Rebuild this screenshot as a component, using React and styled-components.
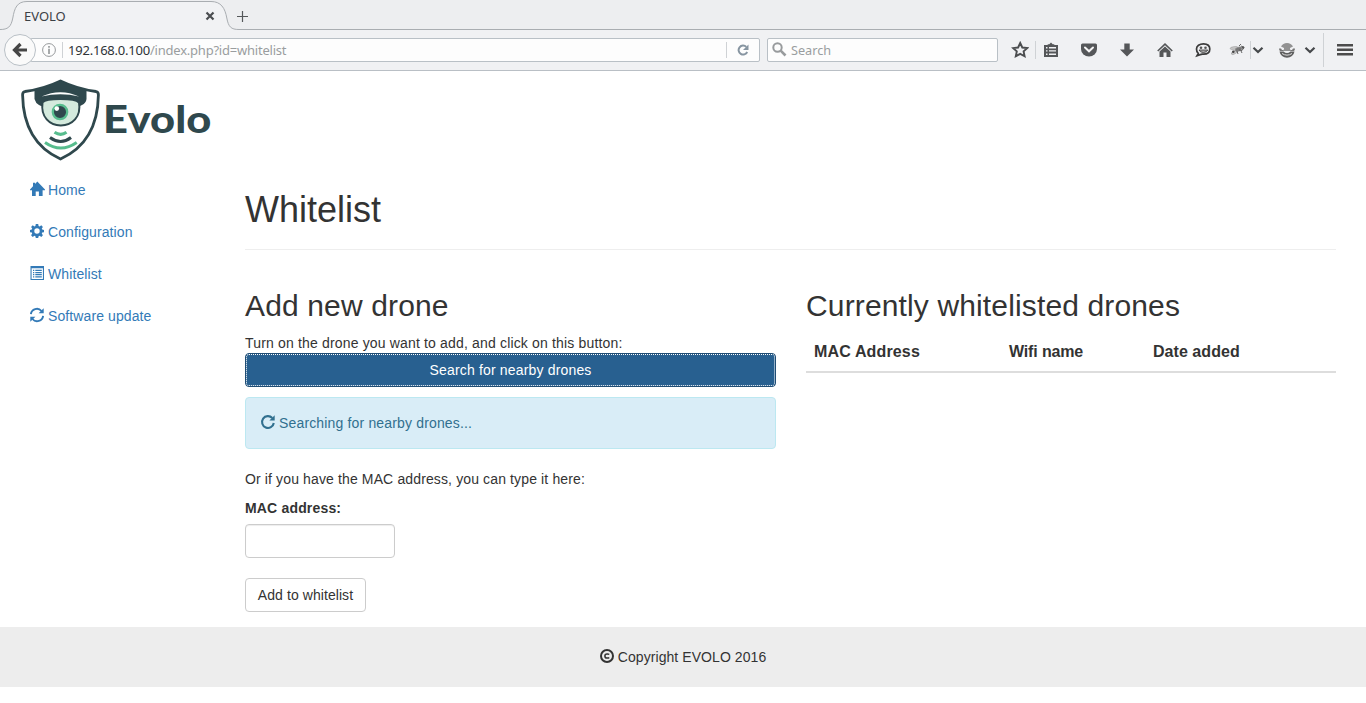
import React from 'react';
import styled, { createGlobalStyle } from 'styled-components';

const GlobalStyle = createGlobalStyle`
  *, *::before, *::after { box-sizing: border-box; }
  html, body { margin: 0; padding: 0; background: #fff; }
  body {
    font-family: "Liberation Sans", Arial, sans-serif;
    font-size: 14px;
    line-height: 20px;
    letter-spacing: 0.1px;
    color: #333;
    overflow: hidden;
  }
  svg { display: block; flex: none; }
`;

/* ---------- browser window ---------- */

const TabStrip = styled.div`
  position: relative;
  display: flex;
  align-items: center;
  height: 30px;
  padding: 2px 0 0 24px;
  background: #edeef0;
  font: 13px/20px "Noto Sans", sans-serif;
  letter-spacing: 0;
  color: #3b4045;
`;

const TabOutline = styled.svg`
  position: absolute;
  left: 0;
  top: 0;
`;

const TabTitle = styled.span`
  position: relative;
  width: 181px;
`;

const TabControl = styled.svg`
  position: relative;
  margin-right: ${(p) => p.$after || 0}px;
`;

const Toolbar = styled.div`
  display: flex;
  align-items: center;
  height: 41px;
  padding: 0 0 1px 4px;
  background: #f0f1f3;
  border-bottom: 1px solid #b9bfc5;
  font: 13px/20px "Noto Sans", sans-serif;
  letter-spacing: 0;
`;

const BackButton = styled.div`
  position: relative;
  z-index: 1;
  display: flex;
  flex: none;
  align-items: center;
  justify-content: center;
  width: 32px;
  height: 32px;
  border: 1px solid #b9c0c6;
  border-radius: 50%;
  background: #fafafa;
`;

const Field = styled.div`
  display: flex;
  flex: none;
  align-items: center;
  width: ${(p) => p.$width}px;
  height: 24px;
  margin-left: ${(p) => p.$before}px;
  padding-left: ${(p) => p.$inset}px;
  border: 1px solid #b9c0c6;
  border-radius: 2px;
  background: #fdfdfd;
  color: #9a9d9f;
`;

const Address = styled.span`
  flex: 1;
  padding-left: 5px;
  font-size: 13px;
  letter-spacing: -0.22px;
  white-space: nowrap;
  b { font-weight: 400; color: #2e3338; }
`;

const Divider = styled.i`
  flex: none;
  width: 1px;
  height: ${(p) => p.$height || 16}px;
  margin-left: ${(p) => p.$before || 0}px;
  background: #cfd2d5;
`;

const Placeholder = styled.span`
  padding-left: 4px;
  font-size: 12.7px;
`;

const ReloadSlot = styled.div`
  display: flex;
  justify-content: center;
  width: 32px;
`;

const Tool = styled.div`
  display: flex;
  flex: none;
  justify-content: center;
  width: ${(p) => p.$width}px;
  margin-left: ${(p) => p.$before || 0}px;
`;

/* ---------- page ---------- */

const LogoBar = styled.header`
  height: 99px;
  padding: 6px 0 0 20px;
`;

const Columns = styled.div`
  display: flex;
  height: 457px;
`;

const Sidebar = styled.nav`
  display: flex;
  flex-direction: column;
  gap: 2px;
  width: 245px;
  padding-left: 15px;
`;

const NavLink = styled.a`
  display: flex;
  align-items: center;
  gap: 4px;
  height: 40px;
  padding: 0 15px;
  color: #337ab7;
  text-decoration: none;
  svg { margin-top: -2px; }
`;

const Main = styled.main`
  width: 1091px;
  padding-top: 20px;
`;

const PageHeader = styled.div`
  height: 60px;
  margin-bottom: 20px;
  border-bottom: 1px solid #eee;
`;

const Title = styled.h1`
  margin: 0;
  font-size: 36px;
  line-height: 40px;
  font-weight: 400;
  letter-spacing: 0;
`;

const Panels = styled.div`
  display: grid;
  grid-template-columns: 531px 530px;
  gap: 30px;
`;

const Heading = styled.h2`
  margin: 19px 0 11px;
  font-size: 30px;
  line-height: 33px;
  font-weight: 400;
  letter-spacing: 0.14px;
`;

const Text = styled.p`
  margin: 0 0 ${(p) => p.$after || 0}px;
  letter-spacing: ${(p) => p.$tracking || 0.13}px;
`;

const Button = styled.button`
  display: block;
  width: ${(p) => (p.$primary ? '100%' : '121px')};
  height: 34px;
  padding: 0;
  border: 1px solid ${(p) => (p.$primary ? '#204d74' : '#ccc')};
  border-radius: 4px;
  outline: ${(p) => (p.$primary ? '1px dotted #fff' : 'none')};
  outline-offset: -2px;
  background: ${(p) => (p.$primary ? '#286090' : '#fff')};
  color: ${(p) => (p.$primary ? '#fff' : '#333')};
  font: 14px/20px "Liberation Sans", Arial, sans-serif;
  letter-spacing: ${(p) => (p.$primary ? 0.17 : 0.07)}px;
`;

const Alert = styled.div`
  display: flex;
  align-items: center;
  gap: 4px;
  height: 52px;
  margin: 10px 0 20px;
  padding: 0 15px;
  border: 1px solid #bce8f1;
  border-radius: 4px;
  background: #d9edf7;
  color: #31708f;
  letter-spacing: 0.16px;
  svg { margin-top: -2px; }
`;

const Label = styled.label`
  display: block;
  margin-bottom: 6px;
  font-weight: 700;
  letter-spacing: 0.17px;
`;

const Input = styled.input`
  display: block;
  width: 150px;
  height: 34px;
  margin-bottom: 20px;
  border: 1px solid #ccc;
  border-radius: 4px;
  box-shadow: inset 0 1px 1px rgba(0, 0, 0, 0.075);
`;

const TableHead = styled.div`
  display: grid;
  grid-template-columns: 195px 144px 1fr;
  height: 40px;
  border-bottom: 2px solid #ddd;
  font-size: 16px;
  line-height: 22px;
  font-weight: 700;
`;

const HeadCell = styled.span`
  padding: 8px;
  letter-spacing: ${(p) => p.$tracking}px;
`;

const Footer = styled.footer`
  display: flex;
  align-items: center;
  justify-content: center;
  gap: 4px;
  height: 60px;
  background: #ededed;
  letter-spacing: 0.07px;
  svg { margin-top: -2px; }
`;

/* ---------- drawings ---------- */

const Glyph = ({ children }) => (
  <svg width="14" height="14" viewBox="0 0 14 14" fill="currentColor" overflow="visible">
    {children}
  </svg>
);

const HomeGlyph = () => (
  <Glyph>
    <path d="M7.300 -.5 15 7.500V8.200H12.600V14H8.900V9.500H5.700V14H2V8.200H0V7.500L3 4.300V.8H5.100V2.100Z" />
  </Glyph>
);

const CogGlyph = () => (
  <Glyph>
    <path
      fillRule="evenodd"
      d="M5.800 0h2.400l.4 2 1 .4 1.700-1.100 1.600 1.600-1.100 1.700.4 1 1.800.3v2.300l-1.800.4-.4 1 1.100 1.700-1.600 1.600-1.700-1.100-1 .4-.4 1.800H5.800l-.4-1.800-1-.4-1.700 1.100-1.600-1.600 1.100-1.700-.4-1L0 8.200V5.900l1.800-.3.4-1L1.100 2.900l1.600-1.600 1.700 1.100 1-.4ZM7 4.300A2.700 2.700 0 1 0 7 9.700 2.700 2.700 0 0 0 7 4.300Z"
    />
  </Glyph>
);

const ListGlyph = () => (
  <Glyph>
    <path
      fillRule="evenodd"
      d="M.5 0h13.500v14H.5ZM1.600 2.200v10.700h11.300V2.200ZM3 3.800h1.300v1.200H3Zm2.300 0h6.500v1.200H5.300ZM3 6h1.300v1.200H3Zm2.300 0h6.500v1.200H5.300ZM3 8.100h1.300v1.200H3Zm2.300 0h6.500v1.200H5.300ZM3 10.300h1.300v1.200H3Zm2.300 0h6.500v1.200H5.300Z"
    />
  </Glyph>
);

const RefreshGlyph = () => (
  <Glyph>
    <path
      fill="none"
      stroke="currentColor"
      strokeWidth="1.900"
      d="M.9 6.200A6 6 0 0 1 11.500 3M13.100 7.800A6 6 0 0 1 2.500 11"
    />
    <path d="M13.700.2V5.300H8.600ZM.3 13.800V8.700H5.400Z" />
  </Glyph>
);

const RepeatGlyph = () => (
  <Glyph>
    <path fill="none" stroke="currentColor" strokeWidth="2.100" d="M11.300 3A5.900 5.900 0 1 0 12.800 8" />
    <path d="M13.700.2V5.500H8.400Z" />
  </Glyph>
);

const CopyrightGlyph = () => (
  <Glyph>
    <circle cx="7" cy="7" r="6" fill="none" stroke="currentColor" strokeWidth="2" />
    <path
      fill="none"
      stroke="currentColor"
      strokeWidth="1.500"
      d="M9.200 5.500C8.600 4.800 7.900 4.900 7 4.900 5.500 4.900 4.900 5.700 4.900 7S5.500 9.100 7 9.100C7.900 9.100 8.600 9.200 9.200 8.500"
    />
  </Glyph>
);

const Logo = () => (
  <svg width="195" height="86" viewBox="20 77 195 86">
    <path
      d="M60.500 81Q77 89 96 91.500Q98.500 92 98.400 95C98 124 87 147 60.500 159C34 147 23 124 22.600 95Q22.500 92 25 91.500Q44 89 60.500 81Z"
      fill="#fff"
      stroke="#2f484d"
      strokeWidth="2.800"
    />
    <path d="M34.500 89.500Q48 87 60.500 80.500Q73 87 86.500 89.500V99Q86 103 82 105L80 106H41L39 105Q35.500 103 34.500 99Z" fill="#2f484d" />
    <path
      d="M42.500 102.500Q45 99 60.500 99T79 102.500C81.500 117 72 125.500 60.800 125.500S40.500 117 42.500 102.500Z"
      fill="#d4eadd"
      stroke="#2f484d"
      strokeWidth="2"
    />
    <path d="M41.500 96.500Q60.500 88 79 96.500Q60.500 92 41.500 96.500Z" fill="#fff" />
    <circle cx="60" cy="112" r="7.200" fill="#2f484d" stroke="#57bd8e" strokeWidth="2.300" />
    <circle cx="56.800" cy="108.600" r="2.300" fill="#fff" />
    <g fill="none" strokeWidth="3">
      <path d="M54.500 132.300Q60.800 136.500 66.500 132.300" stroke="#57bd8e" />
      <path d="M50 137.500Q60.800 145.500 71 137.500" stroke="#2f484d" />
      <path d="M45 142.500Q60.800 153.500 76.700 142.500" stroke="#57bd8e" />
    </g>
    <text
      x="103"
      y="132.500"
      fill="#2f484d"
      fontFamily="Lato"
      fontWeight="900"
      fontSize="38.500"
      textLength="108.500"
      lengthAdjust="spacingAndGlyphs"
    >
      Evolo
    </text>
  </svg>
);

const Chevron = () => (
  <svg width="12" height="12" viewBox="0 0 12 12">
    <path d="M1.500 3.800 6 8 10.500 3.800" fill="none" stroke="#45484a" strokeWidth="2.200" />
  </svg>
);

const ToolGlyph = ({ children }) => (
  <svg width="16" height="16" viewBox="0 0 16 16" fill="#555759">
    {children}
  </svg>
);

const navItems = [
  ['Home', HomeGlyph],
  ['Configuration', CogGlyph],
  ['Whitelist', ListGlyph],
  ['Software update', RefreshGlyph],
];

const Browser = () => (
  <>
    <TabStrip>
      <TabOutline width="1366" height="30" viewBox="0 0 1366 30">
        <path
          d="M0 29.500C8 29.500 11 27 12.800 18C14.500 8 17 1.500 27 1.500H211C221 1.500 225 8 226.800 18C228.500 27 231 29.500 239 29.500H1366V31H0Z"
          fill="#f1f2f4"
          stroke="#a9adb1"
        />
      </TabOutline>
      <TabTitle>EVOLO</TabTitle>
      <TabControl $after={22} width="10" height="10" viewBox="0 0 10 10">
        <path d="M1.500 1.500 8.500 8.500M8.500 1.500 1.500 8.500" stroke="#4a4d50" strokeWidth="2.200" />
      </TabControl>
      <TabControl width="11" height="11" viewBox="0 0 11 11">
        <path d="M5.500 0V11M0 5.500H11" stroke="#55585a" strokeWidth="1.200" />
      </TabControl>
    </TabStrip>
    <Toolbar>
      <BackButton>
        <svg width="16" height="16" viewBox="0 0 16 16">
          <path d="M8.500 2 2.500 8 8.500 14M2.500 8H15" fill="none" stroke="#464646" strokeWidth="3.200" />
        </svg>
      </BackButton>
      <Field $width={730} $before={-6} $inset={11}>
        <svg width="14" height="14" viewBox="0 0 14 14">
          <circle cx="7" cy="7" r="6.400" fill="none" stroke="#96999b" />
          <path d="M7 5.800V11M7 3V4.700" stroke="#8b8e90" strokeWidth="1.500" />
        </svg>
        <Divider $before={6} />
        <Address>
          <b>192.168.0.100</b>/index.php?id=whitelist
        </Address>
        <Divider />
        <ReloadSlot>
          <svg width="12" height="12" viewBox="0 0 12 12">
            <path d="M9.300 2.900A4.500 4.500 0 1 0 10.200 8" fill="none" stroke="#8795a1" strokeWidth="2" />
            <path d="M11.500.5V6H6Z" fill="#8795a1" />
          </svg>
        </ReloadSlot>
      </Field>
      <Field $width={231} $before={7} $inset={4}>
        <svg width="15" height="15" viewBox="0 0 15 15">
          <g fill="none" stroke="#989b9d">
            <circle cx="5.500" cy="5.500" r="4.200" strokeWidth="2" />
            <path d="M8.700 8.700 13.500 13.500" strokeWidth="2.600" />
          </g>
        </svg>
        <Placeholder>Search</Placeholder>
      </Field>
      <Tool $width={37}>
        <svg width="24" height="18" viewBox="0 0 24 18">
          <path
            d="M15.200 2 17.300 6.500 22.200 7.100 18.600 10.400 19.600 15.300 15.200 12.900 10.800 15.300 11.800 10.400 8.200 7.100 13.100 6.500Z"
            fill="none"
            stroke="#4b4d4f"
            strokeWidth="1.900"
          />
        </svg>
      </Tool>
      <Divider $height={18} />
      <Tool $width={30}>
        <ToolGlyph>
          <path
            fillRule="evenodd"
            d="M1 3H4.700V2.200H6.300L8 .5 9.700 2.200H11.300V3H15V15H1ZM3 5V6.400H4.500V5ZM6 5V6.400H13V5ZM3 8.200V9.600H4.500V8.200ZM6 8.200V9.600H13V8.200ZM3 11.400V12.900H4.500V11.400ZM6 11.400V12.900H13V11.400Z"
          />
        </ToolGlyph>
      </Tool>
      <Tool $width={46}>
        <ToolGlyph>
          <path d="M1.500 1.500H14.500Q16 1.500 16 3V7A8 7.500 0 0 1 0 7V3Q0 1.500 1.500 1.500Z" />
          <path d="M4 5.500 8 9.300 12 5.500" fill="none" stroke="#f5f5f5" strokeWidth="2" strokeLinecap="round" />
        </ToolGlyph>
      </Tool>
      <Tool $width={30}>
        <ToolGlyph>
          <path d="M5.300 1.500H10.700V7.500H15L8 14.500 1 7.500H5.300Z" />
        </ToolGlyph>
      </Tool>
      <Tool $width={46}>
        <ToolGlyph>
          <path d="M8 1 15.800 8.500 14.700 9.600 8 3.300 1.300 9.600 .2 8.500Z" />
          <path d="M8 4.400 13.500 9.600V15H9.500V10.500H6.500V15H2.500V9.600Z" />
        </ToolGlyph>
      </Tool>
      <Tool $width={30}>
        <ToolGlyph>
          <path
            d="M8.500 1.800C12.500 1.800 14.800 4 14.800 7S12.500 12.200 8.500 12.200C7 12.200 6 12 5 12.800L2 13.800 3.300 11.500C1.500 10 1.500 8.500 1.500 7 1.500 4 4.500 1.800 8.500 1.800Z"
            fill="#f0f1f3"
            stroke="#3b3b3b"
            strokeWidth="1.700"
          />
          <circle cx="6" cy="5.700" r="1.300" fill="#555" />
          <circle cx="10.500" cy="5.700" r="1.300" fill="#555" />
          <path d="M4 8H12.800Q11.500 10.500 8.300 10.500T4 8Z" fill="#aaa" stroke="#333" strokeWidth=".8" />
        </ToolGlyph>
      </Tool>
      <Tool $width={39}>
        <svg width="18" height="16" viewBox="0 0 18 16">
          <g fill="#c8c8c8" stroke="#999" strokeWidth=".6">
            <ellipse cx="5" cy="6" rx="4" ry="1.300" transform="rotate(-8 5 6)" />
            <ellipse cx="5.500" cy="10.300" rx="3.500" ry="1.500" transform="rotate(-30 5.500 10.300)" />
            <ellipse cx="9.500" cy="7.200" rx="3.600" ry="2" transform="rotate(-20 9.500 7.200)" fill="#777" />
          </g>
          <path d="M12 4 15 5.500 13 8.500 10 8M8 9 9 12M12 9 13 11M10 4 12 2" fill="none" stroke="#555" strokeWidth=".9" />
          <circle cx="14" cy="5.500" r="1.300" fill="#555" />
          <circle cx="4.300" cy="9.800" r="1.300" fill="#444" />
        </svg>
      </Tool>
      <Divider $height={18} $before={-7} />
      <Tool $width={13}>
        <Chevron />
      </Tool>
      <Tool $width={46}>
        <svg width="16" height="16" viewBox="0 0 16 16">
          <path d="M2 4.500A6.800 6.800 0 0 1 14 4.500L11 6V7L12 9H4L5 7V6Z" fill="#929292" />
          <path d="M0 6.500 2 6.500 3 8H4.500V9H1Q0 8 0 6.500ZM16 6.500 14 6.500 13 8H11.500V9H15Q16 8 16 6.500Z" fill="#777" />
          <path d="M.5 9.500H4.500Q8 12.500 11.500 9.500H15.500A7.600 7.600 0 0 1 .5 9.500Z" fill="#5e5e5e" />
          <path d="M3 11.500Q8 14.800 13 11.500" fill="none" stroke="#ddd" strokeWidth="1" />
        </svg>
      </Tool>
      <Tool $width={12} $before={-6}>
        <Chevron />
      </Tool>
      <Divider $height={34} $before={7} />
      <Tool $width={42}>
        <ToolGlyph>
          <path d="M0 2H16V4.500H0ZM0 6.500H16V9H0ZM0 11H16V13.500H0Z" fill="#4c4c4c" />
        </ToolGlyph>
      </Tool>
    </Toolbar>
  </>
);

export default function App() {
  return (
    <>
      <GlobalStyle />
      <Browser />
      <LogoBar>
        <Logo />
      </LogoBar>
      <Columns>
        <Sidebar>
          {navItems.map(([name, Icon]) => (
            <NavLink key={name}>
              <Icon />
              {name}
            </NavLink>
          ))}
        </Sidebar>
        <Main>
          <PageHeader>
            <Title>Whitelist</Title>
          </PageHeader>
          <Panels>
            <section>
              <Heading>Add new drone</Heading>
              <Text $tracking={0.165}>Turn on the drone you want to add, and click on this button:</Text>
              <Button $primary>Search for nearby drones</Button>
              <Alert>
                <RepeatGlyph />
                Searching for nearby drones...
              </Alert>
              <Text $after={9}>Or if you have the MAC address, you can type it here:</Text>
              <Label htmlFor="mac">MAC address:</Label>
              <Input id="mac" />
              <Button>Add to whitelist</Button>
            </section>
            <section>
              <Heading>Currently whitelisted drones</Heading>
              <TableHead>
                <HeadCell $tracking={0.15}>MAC Address</HeadCell>
                <HeadCell $tracking={-0.15}>Wifi name</HeadCell>
                <HeadCell $tracking={0.05}>Date added</HeadCell>
              </TableHead>
            </section>
          </Panels>
        </Main>
      </Columns>
      <Footer>
        <CopyrightGlyph />
        Copyright EVOLO 2016
      </Footer>
    </>
  );
}
